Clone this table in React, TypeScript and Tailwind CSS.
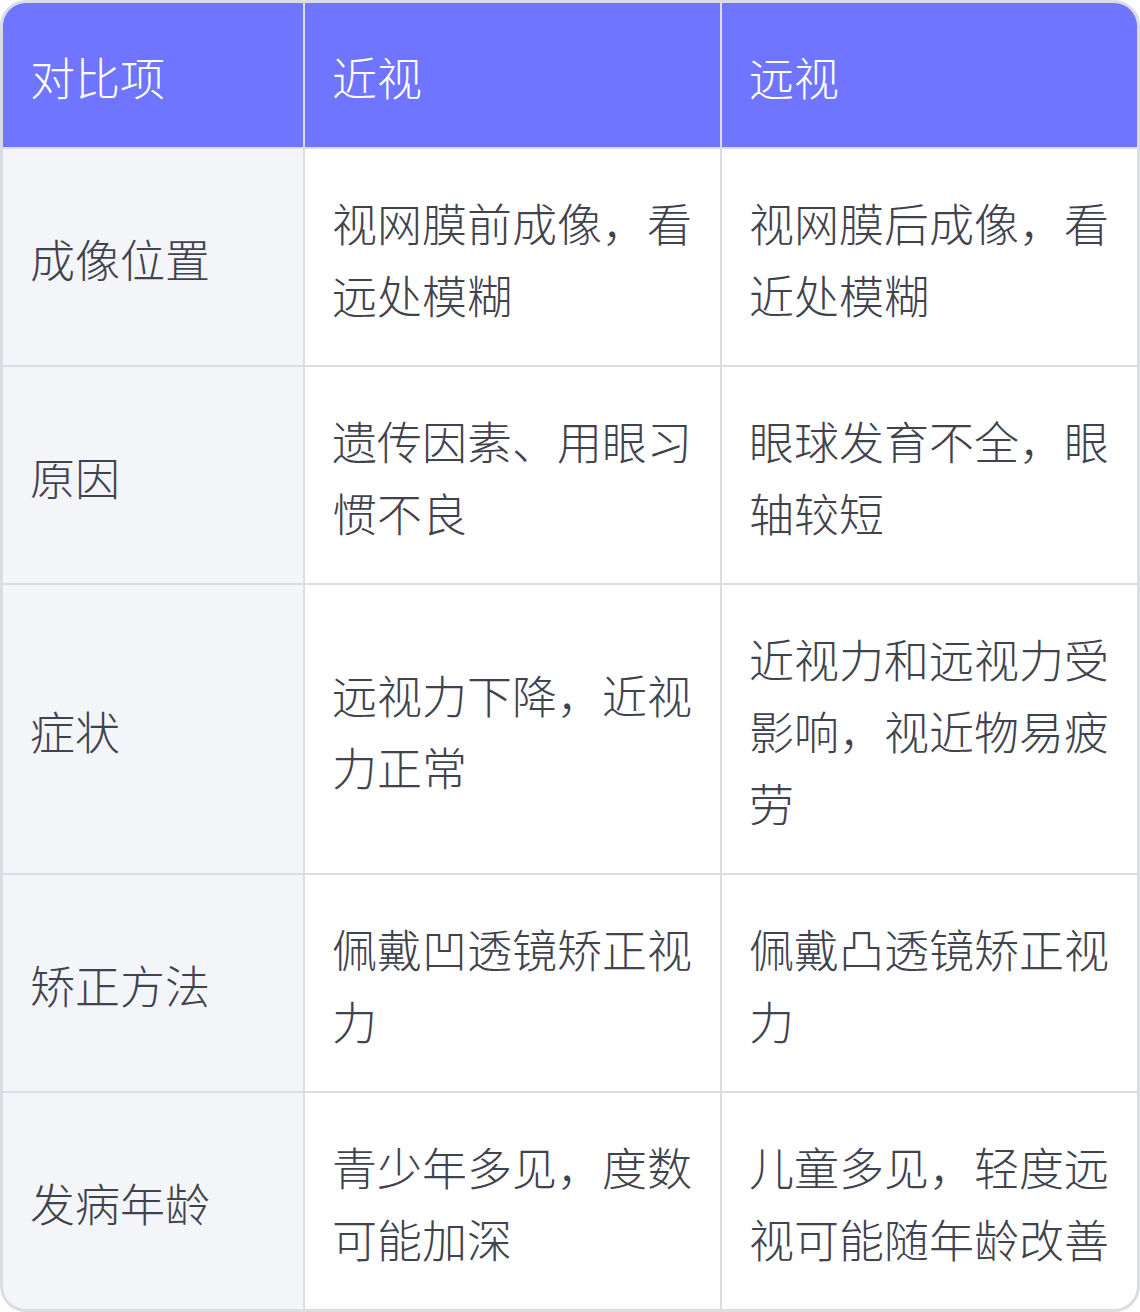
const HEAD = ['对比项', '近视', '远视']

const ROWS: Array<[string, string, string]> = [
  ['成像位置', '视网膜前成像，看远处模糊', '视网膜后成像，看近处模糊'],
  ['原因', '遗传因素、用眼习惯不良', '眼球发育不全，眼轴较短'],
  ['症状', '远视力下降，近视力正常', '近视力和远视力受影响，视近物易疲劳'],
  ['矫正方法', '佩戴凹透镜矫正视力', '佩戴凸透镜矫正视力'],
  ['发病年龄', '青少年多见，度数可能加深', '儿童多见，轻度远视可能随年龄改善'],
]

export default function App() {
  return (
    <div className="w-[1140px] h-[1312px] bg-white font-light" style={{ fontFamily: '"Noto Sans CJK SC", "Noto Sans", sans-serif' }}>
      <div className="grid grid-cols-[300px_415px_415px] gap-[2px] bg-[#dcdde3] border-[3px] border-[#dcdde3] rounded-[26px] overflow-hidden">
        {HEAD.map((h) => (
          <div key={h} className="bg-[#7075ff] text-white text-[45px] leading-[72px] px-[27px] pt-[38px] pb-[34px]">
            {h}
          </div>
        ))}
        {ROWS.map((r) => (
          <>
            <div key={r[0]} className="bg-[#f4f5f9] text-[#40424d] text-[45px] leading-[72px] px-[27px] pt-[38px] pb-[34px] flex items-center">
              {r[0]}
            </div>
            <div key={r[0] + 'a'} className="bg-white text-[#40424d] text-[45px] leading-[72px] px-[27px] pt-[38px] pb-[34px] flex items-center">
              {r[1]}
            </div>
            <div key={r[0] + 'b'} className="bg-white text-[#40424d] text-[45px] leading-[72px] px-[27px] pt-[38px] pb-[34px] flex items-center">
              {r[2]}
            </div>
          </>
        ))}
      </div>
    </div>
  )
}
